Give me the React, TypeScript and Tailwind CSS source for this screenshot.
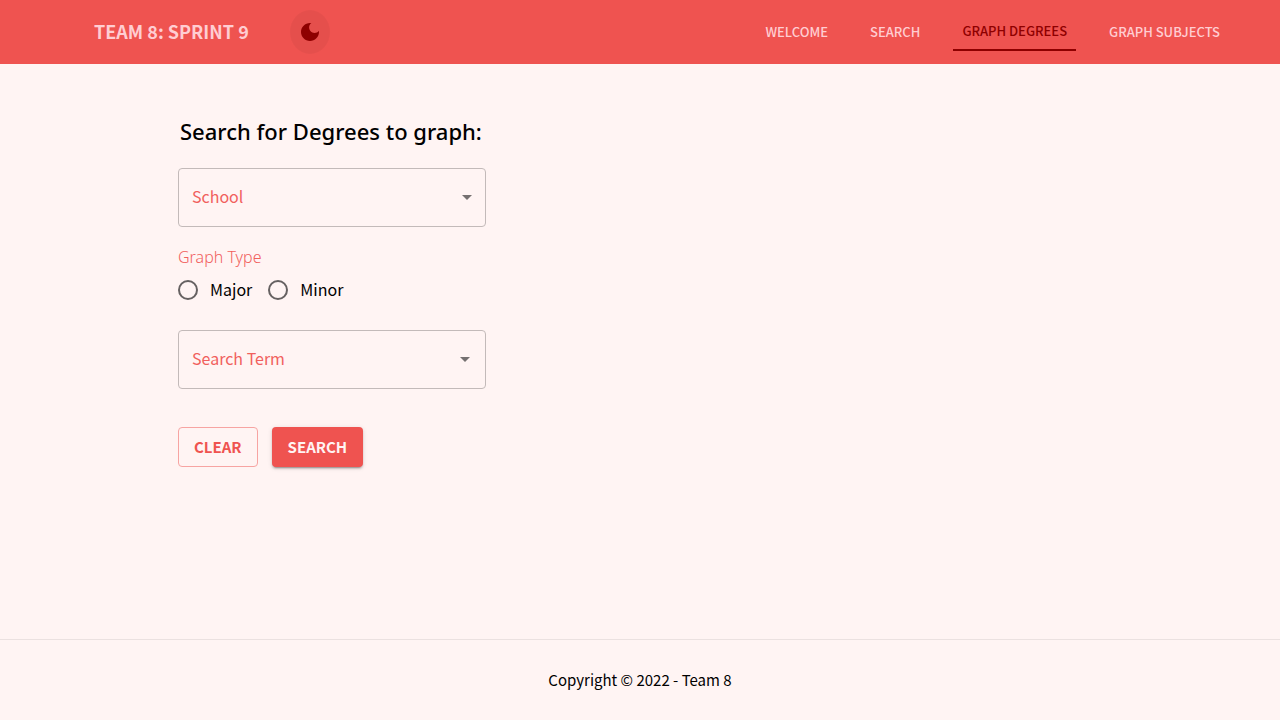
import { useState } from "react";

type NavItem = { label: string; href: string };

const navItems: NavItem[] = [
  { label: "WELCOME", href: "#welcome" },
  { label: "SEARCH", href: "#search" },
  { label: "GRAPH DEGREES", href: "#degrees" },
  { label: "GRAPH SUBJECTS", href: "#subjects" },
];

function MoonIcon() {
  return (
    <svg viewBox="0 0 24 24" className="size-6 fill-current" aria-hidden="true">
      <path d="M12 3c-4.97 0-9 4.03-9 9s4.03 9 9 9 9-4.03 9-9c0-.46-.04-.92-.1-1.36-.98 1.37-2.58 2.26-4.4 2.26-2.98 0-5.4-2.42-5.4-5.4 0-1.81.89-3.42 2.26-4.4-.44-.06-.9-.1-1.36-.1z" />
    </svg>
  );
}

function Header() {
  return (
    <header className="flex h-16 items-center justify-between bg-[#ef5350] pr-[51px] pl-[94px] text-[#ffcdd2]">
      <div className="flex items-center gap-[41px]">
        <a href="#home" className="pb-[2px] text-lg leading-8 font-bold whitespace-nowrap">
          TEAM 8: SPRINT 9
        </a>
        <button
          type="button"
          aria-label="Toggle dark mode"
          className="flex h-11 w-10 items-center justify-center rounded-[50%] bg-black/4 text-[#8e0000]"
        >
          <MoonIcon />
        </button>
      </div>
      <nav className="flex items-center gap-6 text-[13px] leading-6 font-medium whitespace-nowrap">
        {navItems.map((item) => (
          <a
            key={item.label}
            href={item.href}
            aria-current={item.label === "GRAPH DEGREES" ? "page" : undefined}
            className="px-[9px] py-[6px] aria-[current=page]:border-b-2 aria-[current=page]:border-[#8e0000] aria-[current=page]:text-[#8e0000]"
          >
            {item.label}
          </a>
        ))}
      </nav>
    </header>
  );
}

type FieldProps = {
  id: string;
  label: string;
  options: string[];
  arrowClass: string;
};

function SelectField({ id, label, options, arrowClass }: FieldProps) {
  const [value, setValue] = useState("");
  return (
    <div className="grid items-center">
      <select
        id={id}
        value={value}
        onChange={(event) => setValue(event.target.value)}
        className="col-start-1 row-start-1 h-[59px] w-full appearance-none rounded border border-[#c3bab9] bg-transparent px-[13px] text-base"
      >
        <option value="" />
        {options.map((option) => (
          <option key={option}>{option}</option>
        ))}
      </select>
      {value === "" && (
        <label
          htmlFor={id}
          className="pointer-events-none col-start-1 row-start-1 pb-1 pl-[14px] text-base leading-6 text-[#f1605d]"
        >
          {label}
        </label>
      )}
      <svg
        viewBox="0 0 24 24"
        className={`pointer-events-none col-start-1 row-start-1 mb-[2px] size-6 justify-self-end fill-[#757070] ${arrowClass}`}
        aria-hidden="true"
      >
        <path d="M7 10l5 5 5-5z" />
      </svg>
    </div>
  );
}

function RadioOption({ label }: { label: string }) {
  return (
    <label className="flex items-center gap-3 text-base leading-6">
      <input
        type="radio"
        name="graph-type"
        value={label}
        className="size-5 appearance-none rounded-full border-2 border-[#666161] checked:border-[6px] checked:border-[#ef5350]"
      />
      <span className="pb-[2px]">{label}</span>
    </label>
  );
}

export default function App() {
  return (
    <div className="flex min-h-screen flex-col bg-[#fff4f3] font-['Noto_Sans_CJK_SC',sans-serif] text-black">
      <Header />
      <main className="flex-1 pt-[51px] pl-[178px]">
        <form className="w-[308px]" onSubmit={(event) => event.preventDefault()}>
          <h1 className="mb-[21px] pl-[2px] font-['Noto_Sans',sans-serif] text-[22px] leading-8 font-medium whitespace-nowrap">
            Search for Degrees to graph:
          </h1>
          <SelectField
            id="school"
            label="School"
            options={["Arts", "Engineering", "Science"]}
            arrowClass="mr-[7px]"
          />
          <fieldset className="mt-[18px] mb-[27px]">
            <legend className="font-['Noto_Sans',sans-serif] text-base leading-6 font-light text-[#f1605d]">
              Graph Type
            </legend>
            <div className="flex gap-4 pt-2">
              <RadioOption label="Major" />
              <RadioOption label="Minor" />
            </div>
          </fieldset>
          <SelectField
            id="search-term"
            label="Search Term"
            options={["Biology", "Computer Science", "Mathematics"]}
            arrowClass="mr-[9px]"
          />
          <div className="mt-[38px] flex gap-[14px] text-[15px] leading-6 font-bold">
            <button
              type="reset"
              className="h-10 rounded border border-[#f7a4a2] px-[15px] text-[#ef5350]"
            >
              CLEAR
            </button>
            <button
              type="submit"
              className="h-10 rounded bg-[#ef5350] px-4 text-[#fff4f3] shadow-[0_3px_1px_-2px_rgba(0,0,0,0.2),0_2px_2px_0_rgba(0,0,0,0.14),0_1px_5px_0_rgba(0,0,0,0.12)]"
            >
              SEARCH
            </button>
          </div>
        </form>
      </main>
      <footer className="border-t border-[#ebe1e0] pt-7 pb-7 text-center text-[15px] leading-6">
        Copyright © 2022 - Team 8
      </footer>
    </div>
  );
}
